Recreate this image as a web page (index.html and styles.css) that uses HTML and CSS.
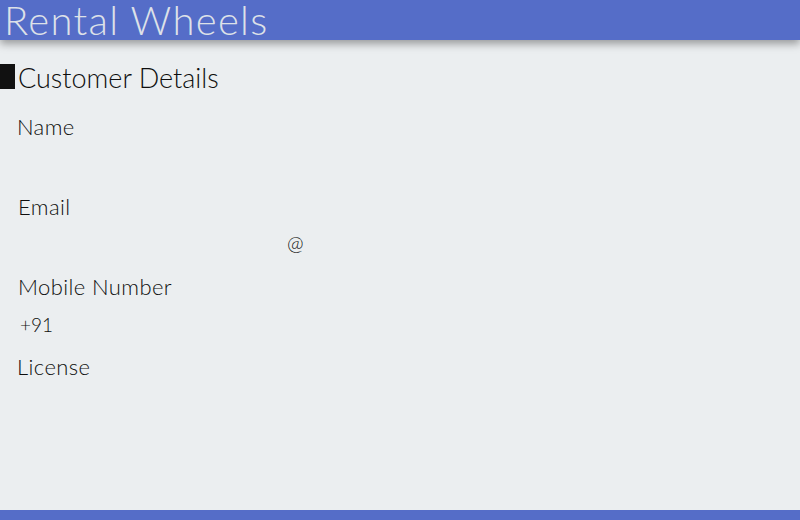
FILE: index.html
```html
<!DOCTYPE html>
<html>
<head>
<meta charset="utf-8">
<link rel="stylesheet" href="styles.css">
</head>
<body>
<header class="topbar"><h1 class="brand">Rental Wheels</h1></header>
<main class="content">
  <h2 class="section-title"><span class="marker"></span>Customer Details</h2>
  <div class="field">
    <label class="label">Name</label>
    <div class="input-row"></div>
  </div>
  <div class="field">
    <label class="label label-shift">Email</label>
    <div class="input-row"><span class="at">@</span></div>
  </div>
  <div class="field">
    <label class="label label-shift">Mobile Number</label>
    <div class="input-row mobile-row"><span class="prefix">+91</span></div>
  </div>
  <div class="field">
    <label class="label">License</label>
  </div>
</main>
<footer class="bottombar"></footer>
</body>
</html>
```

FILE: styles.css
```css
html, body {
  margin: 0;
  padding: 0;
  height: 520px;
  overflow: hidden;
}
body {
  background: #ebeef0;
  font-family: Lato, "Open Sans", sans-serif;
  font-weight: 300;
  color: #0e0e0e;
  display: flex;
  flex-direction: column;
}
.topbar {
  height: 40px;
  flex: none;
  background: #556dc8;
  box-shadow: 0 4px 8px rgba(0,0,0,0.35);
  position: relative;
  z-index: 1;
}
.brand {
  margin: 0;
  padding-left: 4px;
  font-size: 40px;
  font-weight: 300;
  line-height: 40px;
  color: #dde1e8;
  letter-spacing: 1.3px;
  white-space: nowrap;
}
.content {
  flex: 1;
  padding-top: 24px;
}
.section-title {
  margin: 0;
  display: flex;
  align-items: flex-start;
  font-size: 27px;
  font-weight: 300;
  line-height: 27px;
  height: 27px;
  color: #0e0e0e;
}
.marker {
  width: 15px;
  height: 25px;
  background: #111;
  margin-right: 3px;
}
.field {
  display: flex;
  flex-direction: column;
  margin-bottom: 12px;
}
.field:first-of-type {
  margin-top: 22px;
}
.label {
  padding-left: 17px;
  font-size: 22px;
  line-height: 28px;
  letter-spacing: 0.4px;
}
.label-shift {
  padding-left: 18px;
}
.input-row {
  box-sizing: border-box;
  height: 40px;
  padding-top: 3px;
  line-height: 37px;
  font-size: 20px;
}
.mobile-row {
  padding-top: 5px;
}
.at {
  margin-left: 287px;
}
.prefix {
  margin-left: 20px;
  font-size: 19px;
}
.bottombar {
  height: 10px;
  flex: none;
  background: #556dc8;
}
```
